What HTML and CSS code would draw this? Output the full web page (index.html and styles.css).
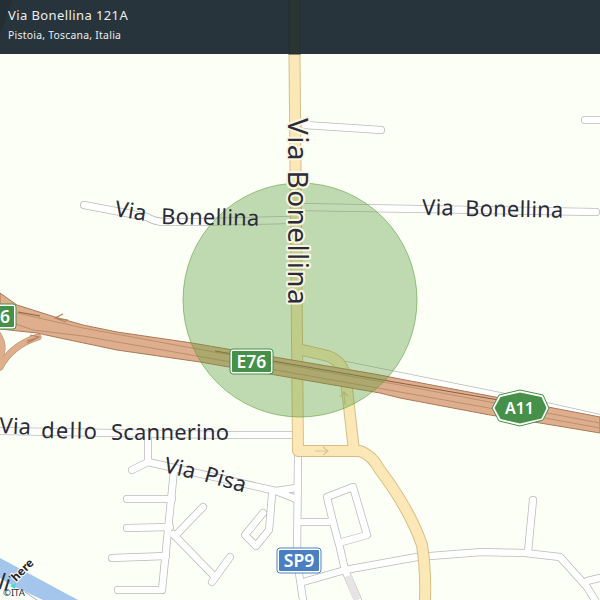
FILE: index.html
```html
<!DOCTYPE html>
<html lang="en">
<head>
  <meta charset="UTF-8">
  <title>Via Bonellina 121A</title>
  <link rel="stylesheet" href="styles.css">
</head>
<body>
  <div class="map-view">
    <svg class="map" width="600" height="600" viewBox="0 0 600 600">
      <defs>
        <g id="minor-roads">
          <path d="M305 125 L381 130"/>
          <path d="M585 120 L600 120"/>
          <path d="M84 205 L147 217 Q155 222 165 222 L200 222 Q240 221 292 220"/>
          <path d="M300 207 L420 209 L596 212"/>
          <path d="M0 431 L228 435 L292 435"/>
          <path d="M148 436 L148 462 L132 470"/>
          <path d="M148 462 L276 491 L296 488"/>
          <path d="M276 491 L296 499"/>
          <path d="M174 470 L162 590 L118 590"/>
          <path d="M172 499 L127 499"/>
          <path d="M170 527 L127 528"/>
          <path d="M166 556 L112 558"/>
          <path d="M175 536 L203 507"/>
          <path d="M173 534 L213 575"/>
          <path d="M230 557 L212 582"/>
          <path d="M272 495 L269 530 L256 546 L245 535 L263 513"/>
          <path d="M298 455 L297 560 L303 600"/>
          <path d="M298 522 L333 522"/>
          <path d="M342 542 L367 535 L353 487 L327 497 L333 522 L340 548 L345 570"/>
          <path d="M303 582 L345 570 L417 557 L482 552 L525 553 L560 557 L587 587 L595 600"/>
          <path d="M533 500 L528 552"/>
          <path d="M587 581 L600 578"/>
          <path d="M340 364 L400 376 L510 398 L600 418"/>
          <path d="M345 570 L358 600"/>
        </g>
        <g id="main-roads">
          <path d="M294 0 L298 451 L360 451 Q372 455 380 470 Q410 510 422 545 Q426 570 425 600"/>
          <path d="M298 349 L328 356 Q344 362 346 380 L354 451"/>
        </g>
        <g id="ramps">
          <path d="M0 367 Q12 345 38 337"/>
          <path d="M-2 335 Q6 348 -2 360"/>
        </g>
      </defs>

      <rect class="land" width="600" height="600"/>
      <path class="river" d="M0 558 L78 600 L43 600 L13 586 L0 578 Z"/>
      <path class="footway" d="M25 592 L37 600"/>

      <use href="#minor-roads" class="road-casing"/>
      <use href="#minor-roads" class="road-fill"/>
      <path class="service" d="M348 576 L357 600"/>
      <use href="#main-roads" class="main-casing"/>
      <use href="#main-roads" class="main-fill"/>
      <use href="#ramps" class="ramp-casing"/>
      <use href="#ramps" class="ramp-fill"/>

      <path class="motorway" d="M0 293 L17 305 L55 317 L83 325 L117 332 L192 343 L380 375 L400 379 L490 396 L548 407 L600 417 L600 433 L540 423 L490 415 L400 398 L380 393 L200 362 L117 350 L60 338 L37 333 L0 329 Z"/>
      <path class="lane" d="M17 313 L83 328 L192 348 L400 385 L600 423"/>
      <path class="lane" d="M10 322 L33 330 L83 336 L197 356 L400 392 L600 428"/>
      <path class="lane-dark" d="M18 312 L40 316"/>
      <path class="lane-dark" d="M215 351 L400 383 L510 402"/>

      <path class="road-arrow motor" d="M66 322 L55 318 L63 314 M55 318 L68 320"/>
      <path class="road-arrow motor" d="M27 343 L39 337 L30 335 M39 337 L27 341"/>
      <path class="road-arrow" d="M315 451 L328 451 M323 447 L328 451 L323 455"/>
      <path class="road-arrow" d="M345 405 L344 392 M340 397 L344 392 L348 396"/>

      <circle class="radius" cx="300" cy="300" r="117"/>

      <text class="label halo" transform="translate(288 118) rotate(90)">Via Bonellina</text>
      <text class="label" transform="translate(114 216) rotate(9)">Via</text>
      <text class="label" transform="translate(161 224) rotate(1)">Bonellina</text>
      <text class="label" transform="translate(422 215) rotate(1)">Via</text>
      <text class="label" transform="translate(465 216) rotate(1)">Bonellina</text>
      <text class="label" transform="translate(-1 433) rotate(3)">Via</text>
      <text class="label wide" transform="translate(41 438) rotate(1)">dello</text>
      <text class="label" transform="translate(111 440)">Scannerino</text>
      <text class="label" transform="translate(163 472) rotate(13)">Via</text>
      <text class="label" transform="translate(203 481) rotate(16)">Pisa</text>
      <text class="label" transform="translate(-3 588) rotate(18)">li</text>

      <g class="shield green">
        <rect class="shield-edge" x="230" y="349" width="43" height="25" rx="3"/>
        <rect class="shield-body" x="232" y="351" width="39" height="21" rx="1"/>
        <text class="shield-text" x="251.500" y="367.500">E76</text>
      </g>
      <g class="shield green">
        <rect class="shield-edge" x="-27" y="304" width="43" height="25" rx="3"/>
        <rect class="shield-body" x="-25" y="306" width="39" height="21" rx="1"/>
        <text class="shield-text" x="5" y="322.500">6</text>
      </g>
      <g class="shield green">
        <path class="shield-edge" d="M492 408 L499 395 L520 390 L543 395 L549 408 L543 420 L520 426 L499 421 Z"/>
        <path class="shield-body" d="M494.500 408 L500.500 397 L520 392.500 L541.500 397 L546.500 408 L541.500 418.500 L520 423.500 L500.500 419 Z"/>
        <text class="shield-text small" x="519.500" y="414">A11</text>
      </g>
      <g class="shield blue">
        <rect class="shield-edge" x="277" y="548" width="44" height="25" rx="3"/>
        <rect class="shield-body" x="279" y="550" width="40" height="21" rx="1"/>
        <text class="shield-text" x="299" y="567">SP9</text>
      </g>

      <path class="here-mark" d="M10 586 L16 583 L15 589 Z"/>
      <text class="here-logo" transform="translate(16 582) rotate(-45)">here</text>
      <text class="attribution" x="3" y="596">©ITA</text>

      <!-- what shows through the top bar -->
      <rect class="bar-under" width="600" height="54"/>
      <path class="bar-shade" d="M0 0 L12 0 L2 30 L0 34 Z"/>
      <rect class="bar-road" x="289" y="-1" width="11" height="55"/>
    </svg>

    <div class="address-bar">
      <div class="address-title">Via Bonellina 121A</div>
      <div class="address-sub">Pistoia, Toscana, Italia</div>
    </div>
  </div>
</body>
</html>
```

FILE: styles.css
```css
body {
  margin: 0;
  font-family: "Noto Sans", sans-serif;
}

.map-view {
  position: relative;
  width: 600px;
  height: 600px;
  overflow: hidden;
}

.map {
  display: block;
}

/* Top bar lies over the map */
.address-bar {
  position: absolute;
  top: 0;
  left: 0;
  right: 0;
  height: 54px;
  box-sizing: border-box;
  padding: 7px 8px 0;
  color: #eceff1;
}

.address-title {
  font-size: 13px;
  line-height: 17px;
  letter-spacing: 0.4px;
}

.address-sub {
  margin-top: 4px;
  font-size: 10.400px;
  line-height: 14px;
  letter-spacing: 0.25px;
}

.bar-under {
  fill: #27343b;
}

.bar-shade {
  fill: #232e35;
}

.bar-road {
  fill: #29352f;
  stroke: #232f34;
  stroke-width: 1;
}

.land {
  fill: #fbfff5;
}

.river {
  fill: #a4c5ec;
}

.footway {
  fill: none;
  stroke: #b5b2b2;
  stroke-width: 1;
}

#minor-roads,
#main-roads,
#ramps {
  fill: none;
  stroke-linecap: round;
  stroke-linejoin: round;
}

.road-casing {
  stroke: #bdb9b9;
  stroke-width: 8;
}

.road-fill {
  stroke: #ffffff;
  stroke-width: 6.500;
}

.service {
  fill: none;
  stroke: #e6e4e4;
  stroke-width: 7;
}

.main-casing {
  stroke: #d9bd88;
  stroke-width: 12;
}

.main-fill {
  stroke: #fce8b6;
  stroke-width: 10;
}

.ramp-casing {
  stroke: #b98b6c;
  stroke-width: 7;
}

.ramp-fill {
  stroke: #dfae8c;
  stroke-width: 6;
}

.motorway {
  fill: #dfae8c;
  stroke: #a9795a;
  stroke-width: 1;
}

.lane {
  fill: none;
  stroke: #b99070;
  stroke-width: 1;
}

.lane-dark {
  fill: none;
  stroke: #8a5f44;
  stroke-width: 1;
}

.road-arrow {
  fill: none;
  stroke: #d8c69a;
  stroke-width: 1.200;
}

.road-arrow.motor {
  stroke: #b4805f;
}

.radius {
  fill: #5f9f3f;
  fill-opacity: 0.38;
  stroke: #5f9f3f;
  stroke-opacity: 0.6;
}

.label {
  font-size: 22px;
  letter-spacing: 0.2px;
  fill: #2a2c3a;
}

.label.wide {
  letter-spacing: 1.300px;
}

.label.halo {
  font-size: 28px;
  letter-spacing: 1.400px;
  stroke: #fbf6e2;
  stroke-width: 4px;
  stroke-linejoin: round;
  paint-order: stroke;
}

.shield-edge {
  fill: #ffffff;
  stroke-linejoin: round;
}

.green .shield-edge {
  stroke: #469049;
  stroke-width: 1;
}

.blue .shield-edge {
  stroke: #4a80c2;
  stroke-width: 1;
}

.green .shield-body {
  fill: #469049;
}

.blue .shield-body {
  fill: #4a80c2;
}

.shield-text {
  font-size: 17.500px;
  font-weight: 600;
  fill: #ffffff;
  text-anchor: middle;
}

.shield-text.small {
  font-size: 16px;
}

.here-mark {
  fill: #48dad0;
}

.here-logo {
  font-size: 11.500px;
  font-weight: 700;
  fill: #20242c;
  stroke: #ffffff;
  stroke-width: 2px;
  paint-order: stroke;
}

.attribution {
  font-size: 9.500px;
  fill: #2a2c3a;
}
```
